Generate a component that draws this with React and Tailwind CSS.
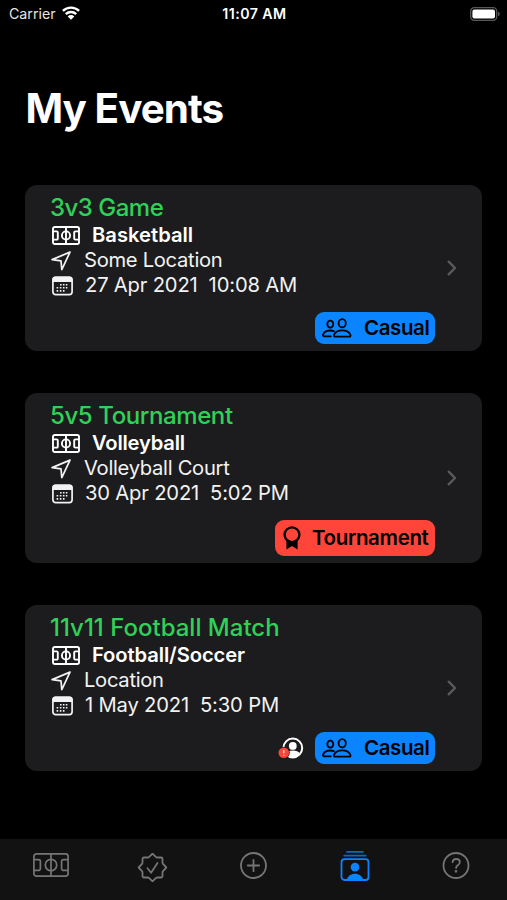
import React, { useState } from "react";

const events = [
  {
    id: 1,
    title: "3v3 Game",
    sport: "Basketball",
    location: "Some Location",
    date: "27 Apr 2021",
    time: "10:08 AM",
    type: "Casual",
    pending: false,
    titleStyle: "tracking-[-0.5px]",
    sportStyle: "tracking-[0px]",
  },
  {
    id: 2,
    title: "5v5 Tournament",
    sport: "Volleyball",
    location: "Volleyball Court",
    date: "30 Apr 2021",
    time: "5:02 PM",
    type: "Tournament",
    pending: false,
    titleStyle: "tracking-[-0.4px]",
    sportStyle: "tracking-[-0.2px]",
  },
  {
    id: 3,
    title: "11v11 Football Match",
    sport: "Football/Soccer",
    location: "Location",
    date: "1 May 2021",
    time: "5:30 PM",
    type: "Casual",
    pending: true,
    titleStyle: "tracking-[0px]",
    sportStyle: "tracking-[-0.1px]",
  },
];

const CourtIcon = ({ className }) => (
  <svg viewBox="0 0 28 19" fill="none" stroke="currentColor" strokeWidth="1.9" className={className}>
    <rect x="1" y="1" width="26" height="17" rx="1.8" />
    <path d="M14 1v17M1 5.4h3.6a1.2 1.2 0 0 1 1.2 1.2v5.8a1.2 1.2 0 0 1-1.2 1.2H1M27 5.4h-3.6a1.2 1.2 0 0 0-1.2 1.2v5.8a1.2 1.2 0 0 0 1.2 1.2H27" />
    <circle cx="14" cy="9.5" r="4.1" />
  </svg>
);

const CourtTabIcon = () => (
  <svg viewBox="0 0 36 24" fill="none" stroke="currentColor" strokeWidth="1.7" className="w-9 h-6">
    <rect x="0.9" y="0.9" width="34.2" height="22.2" rx="2.6" />
    <path d="M18 1v22M1 6.6h4.4a2 2 0 0 1 2 2v6.8a2 2 0 0 1-2 2H1M35 6.600h-4.400a2 2 0 0 0-2 2v6.800a2 2 0 0 0 2 2H35" />
    <circle cx="18" cy="12" r="5.7" />
  </svg>
);

const LocationIcon = () => (
  <svg viewBox="0 0 20 20" fill="none" stroke="currentColor" strokeWidth="1.7" strokeLinejoin="round" className="w-5 h-5">
    <path d="M19 1.100 1.100 8.600l8.900 1.200.8 8.800z" />
  </svg>
);

const CalendarIcon = () => (
  <svg viewBox="0 0 21 20" className="w-[21px] h-5">
    <rect x="0.9" y="1.4" width="19.2" height="17.2" rx="2.8" fill="none" stroke="currentColor" strokeWidth="1.7" />
    <path d="M.5 6V3.400A2.800 2.800 0 0 1 3.300.6h14.400a2.800 2.800 0 0 1 2.800 2.800V6z" fill="currentColor" />
    <path
      d="M8 8.700h1.600M10.900 8.700h1.600M13.800 8.700h1.600M4.600 11.800h1.600M7.800 11.800h1.600M10.900 11.800h1.600M13.800 11.800h1.600M4.600 14.900h1.600M7.800 14.900h1.600M10.900 14.900h1.600"
      stroke="currentColor"
      strokeWidth="1.6"
    />
  </svg>
);

const PeopleIcon = () => (
  <svg viewBox="0 0 30 20" fill="none" stroke="currentColor" strokeWidth="1.8" strokeLinecap="round" className="w-[30px] h-5">
    <ellipse cx="20.2" cy="5.2" rx="3.6" ry="4.1" />
    <path d="M13.200 18.700c-1.100 0-1.600-.8-1.200-1.800 1.100-2.700 4.400-4.500 8.200-4.500s7.100 1.800 8.200 4.500c.4 1-.1 1.800-1.200 1.800z" />
    <ellipse cx="8.300" cy="6.100" rx="3" ry="3.500" />
    <path d="M8.700 18.300H2.300c-1.100 0-1.600-.8-1.200-1.800.9-2.300 3.700-4 7.200-4 1.300 0 2.500.2 3.500.6" />
  </svg>
);

const RosetteIcon = () => (
  <svg viewBox="0 0 18 24" className="w-[18px] h-6">
    <circle cx="9" cy="8.700" r="7.400" fill="none" stroke="currentColor" strokeWidth="2.300" />
    <path d="M3.400 14.500v9.100L9 19.900l5.600 3.700v-9.100A8 8 0 0 1 9 17a8 8 0 0 1-5.600-2.500z" fill="currentColor" />
  </svg>
);

const PendingIcon = () => (
  <svg viewBox="0 0 26 22" className="w-[26px] h-[22px]">
    <circle cx="14.800" cy="11" r="9.400" fill="none" stroke="#fff" strokeWidth="2" />
    <circle cx="14.800" cy="8.900" r="3.900" fill="#fff" />
    <path d="M7.500 16.600c1.500-2.300 4.200-3.200 7.300-3.200s5.800.9 7.300 3.200a9.200 9.200 0 0 1-14.600 0z" fill="#fff" />
    <circle cx="5.800" cy="15.800" r="6" fill="#1c1c1e" />
    <circle cx="5.800" cy="15.800" r="5.300" fill="#ff453a" />
    <path d="M5.800 13v3.300M5.800 17.700v1" stroke="#fff" strokeWidth="1.100" />
  </svg>
);

const SealIcon = () => (
  <svg viewBox="0 0 30 30" fill="none" stroke="currentColor" strokeWidth="1.800" strokeLinejoin="round" strokeLinecap="round" className="w-[30px] h-[30px] translate-x-[0.5px] translate-y-[2.5px]">
    <path d="m15 1.100 3.300 3.200c.5.500 1 .7 1.700.7h3.600c.9 0 1.400.5 1.400 1.400V10c0 .7.200 1.200.7 1.700L28.900 15l-3.200 3.300c-.5.500-.7 1-.7 1.700v3.600c0 .9-.5 1.400-1.400 1.400H20c-.7 0-1.200.2-1.700.7L15 28.900l-3.300-3.200c-.5-.5-1-.7-1.700-.7H6.400c-.9 0-1.400-.5-1.400-1.400V20c0-.7-.2-1.200-.7-1.700L1.100 15l3.200-3.300c.5-.5.7-1 .7-1.700V6.400C5 5.500 5.500 5 6.400 5H10c.7 0 1.200-.2 1.700-.7z" />
    <path d="m10 15.800 3.600 4.400 6.400-9.800" />
  </svg>
);

const PlusIcon = () => (
  <svg viewBox="0 0 28 28" fill="none" stroke="currentColor" strokeWidth="1.800" strokeLinecap="round" className="w-7 h-7 translate-x-[0.5px] translate-y-[0.5px]">
    <circle cx="14" cy="14" r="12.500" />
    <path d="M14 8.300v11.400M8.300 14h11.400" />
  </svg>
);

const MyEventsIcon = () => (
  <svg viewBox="0 0 30 31" className="w-[30px] h-[31px] translate-y-[1.5px]">
    <path d="M7 1.400h16M4.300 5.200h21.400" stroke="currentColor" strokeWidth="1.800" strokeLinecap="round" opacity="0.75" />
    <rect x="1.500" y="8.700" width="27" height="20.800" rx="3" fill="none" stroke="currentColor" strokeWidth="1.800" />
    <circle cx="15" cy="16.600" r="4.300" fill="currentColor" />
    <path d="M6.800 29c1-3.600 4.200-5.800 8.200-5.800s7.200 2.200 8.200 5.800z" fill="currentColor" />
  </svg>
);

const HelpIcon = () => (
  <svg viewBox="0 0 28 28" fill="none" stroke="currentColor" strokeWidth="1.800" strokeLinecap="round" className="w-7 h-7 translate-y-[0.5px]">
    <circle cx="14" cy="14" r="12.500" />
    <path d="M10.600 10.700c.2-2 1.600-3.200 3.600-3.200 2.100 0 3.600 1.300 3.600 3.200 0 1.500-.8 2.300-2 3.100-1.200.8-1.700 1.400-1.700 2.700" />
    <circle cx="14" cy="19.800" r="0.500" fill="currentColor" />
  </svg>
);

const tabs = [
  { id: "games", icon: CourtTabIcon },
  { id: "verified", icon: SealIcon },
  { id: "add", icon: PlusIcon },
  { id: "events", icon: MyEventsIcon },
  { id: "help", icon: HelpIcon },
];

const TypeBadge = ({ type }) => {
  if (type === "Tournament") {
    return (
      <div className="w-[160px] h-9 pl-[8px] rounded-[9px] bg-[#ff453a] text-black flex items-center">
        <RosetteIcon />
        <span className="ml-[11px] text-[20.5px] font-semibold whitespace-nowrap tracking-[-0.35px]">Tournament</span>
      </div>
    );
  }
  return (
    <div className="w-[120px] h-8 pl-[7px] rounded-[9px] bg-[#0a84ff] text-black flex items-center">
      <PeopleIcon />
      <span className="ml-[12px] text-[20.5px] font-semibold whitespace-nowrap tracking-[-0.4px]">Casual</span>
    </div>
  );
};

const EventCard = ({ event }) => (
  <div className="rounded-[12px] bg-[#1c1c1e] pt-[7px] pb-[7px] pl-[26px] pr-[25px] flex items-center">
    <div className="flex-1">
      <h2 className={`h-[31px] -ml-px leading-[31px] text-[24px] font-medium text-[#30d158] whitespace-nowrap ${event.titleStyle}`}>
        {event.title}
      </h2>
      <div className="h-[25px] flex items-center text-[20.2px] whitespace-nowrap">
        <CourtIcon className="w-7 h-[19px] ml-px" />
        <span className={`ml-[12px] font-semibold ${event.sportStyle}`}>{event.sport}</span>
      </div>
      <div className="h-[25px] flex items-center text-[20.2px] text-[#f2f2f2] whitespace-nowrap">
        <LocationIcon />
        <span className="ml-[13px] tracking-[-0.3px]">{event.location}</span>
      </div>
      <div className="h-[25px] flex items-center text-[20.2px] text-[#f2f2f2] whitespace-nowrap">
        <span className="ml-px">
          <CalendarIcon />
        </span>
        <span className="ml-[12px] tracking-[-0.18px]">{event.date}</span>
        <span className="ml-[11px] tracking-[-0.15px]">{event.time}</span>
      </div>
      <div className="mt-[14px] mr-[12px] flex items-center justify-end gap-[11px]">
        {event.pending && <PendingIcon />}
        <TypeBadge type={event.type} />
      </div>
    </div>
    <svg viewBox="0 0 10 16" fill="none" stroke="#5a5a5e" strokeWidth="2.4" strokeLinecap="round" strokeLinejoin="round" className="w-[10px] h-4">
      <path d="m1.700 1.700 6.300 6.300-6.300 6.300" />
    </svg>
  </div>
);

const App = () => {
  const [activeTab, setActiveTab] = useState("events");

  return (
    <div className="w-full h-screen bg-black text-white font-['Inter',sans-serif] flex flex-col overflow-hidden">
      {/* Status Bar */}
      <div className="h-[27px] pl-[9px] pr-[7px] grid grid-cols-3 items-center text-[14.2px]">
        <div className="flex items-center gap-[6px] text-[#e5e5e5]">
          <span>Carrier</span>
          <svg viewBox="0 0 18 14" className="w-[18px] h-[14px]">
            <path d="M.9 4.900a11.600 11.600 0 0 1 16.200 0M3.800 8.100a7.400 7.400 0 0 1 10.400 0" fill="none" stroke="#fff" strokeWidth="2.400" />
            <path d="M9 13.700 5.700 10.400a4.700 4.700 0 0 1 6.600 0z" fill="#fff" />
          </svg>
        </div>
        <span className="text-center font-semibold tracking-[0.45px]">11:07 AM</span>
        <svg viewBox="0 0 30 14" className="w-[30px] h-[14px] justify-self-end">
          <rect x="0.700" y="0.700" width="26" height="12.600" rx="3.600" fill="none" stroke="#58585a" strokeWidth="1.300" />
          <rect x="2.400" y="2.400" width="22.600" height="9.200" rx="2" fill="#fff" />
          <path d="M28 4.700c1.300.5 1.800 1.300 1.800 2.300s-.5 1.800-1.800 2.300z" fill="#58585a" />
        </svg>
      </div>

      {/* Header */}
      <h1 className="mt-[57px] pl-[25.5px] h-[50px] leading-[50px] text-[40.4px] font-bold tracking-[-0.95px]">
        My Events
      </h1>

      {/* Event List */}
      <div className="flex-1 mt-[51px] px-[25px] flex flex-col gap-[42px]">
        {events.map((event) => (
          <EventCard key={event.id} event={event} />
        ))}
      </div>

      {/* Tab Bar */}
      <div className="h-[61px] pb-[10px] bg-[#121212] grid grid-cols-5">
        {tabs.map((tab) => (
          <button
            key={tab.id}
            onClick={() => setActiveTab(tab.id)}
            className={`flex items-center justify-center ${activeTab === tab.id ? "text-[#0a84ff]" : "text-[#757575]"}`}
          >
            <tab.icon />
          </button>
        ))}
      </div>
    </div>
  );
};

export default App;
